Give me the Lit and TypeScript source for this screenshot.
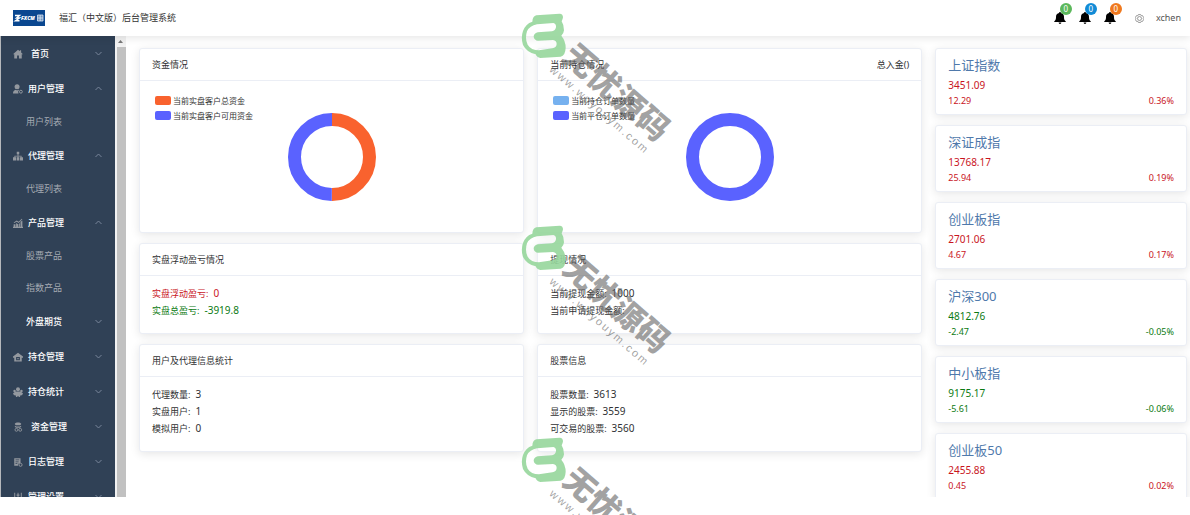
import { LitElement, html, css, svg, nothing, TemplateResult } from "lit";
import { customElement, property } from "lit/decorators.js";
import { classMap } from "lit/directives/class-map.js";

const icons: Record<string, TemplateResult> = {
  home: svg`<path d="M8 1 0 8.500h2V15h4.500v-4.500h3V15H14V8.500h2L13 5.600V2h-2v1.700z"/>`,
  user: svg`<circle cx="6.500" cy="4.200" r="4"/><path d="M0 15c0-3.600 1.600-5.300 4.500-5.900L6.500 10.500l2-1.500 1.300.5A4.500 4.500 0 0 0 8.800 15z"/><circle cx="12.600" cy="12.300" r="2.300" fill="none" stroke="currentColor" stroke-width="1.600"/>`,
  tree: svg`<path d="M6 1h4v4H8.700v2.500h5V10H16v5h-5v-5h1.300V8.900H8.700V10H10v5H6v-5h1.300V8.900H3.700V10H5v5H0v-5h2.300V7.500h5V5H6z"/>`,
  chart: svg`<path d="M1 10h3v4H1zM5 8l3 2v4H5zM9 10l2-2v6H9zM12 6l3-2v10h-3zM1 7l5-3 3 2 5-5 1 1-6 6-3-2-4 2zM0 14h16v2H0z"/>`,
  store: svg`<path d="M8 1 0 7v2h2v6h12V9h2V7zm-3 7h6v5H5zm2 1.500v2h2v-2z" fill-rule="evenodd"/>`,
  gift: svg`<circle cx="8" cy="3.500" r="3.200"/><circle cx="2.500" cy="6.500" r="2"/><circle cx="13.500" cy="6.500" r="2"/><path d="M4 7h8l4 3-1.500 3H12l-1 3H9.500L8 14l-1.500 2H5l-1-3H1.500L0 10z"/>`,
  coins: svg`<path d="M3 2.500C4 0 12 0 13 2.500v1C12 6 4 6 3 3.500zM3 6c2 1.800 8 1.800 10 0v2c-2 1.800-8 1.800-10 0z"/><circle cx="5.500" cy="12.500" r="2.300" fill="none" stroke="currentColor" stroke-width="1.400"/><circle cx="11.500" cy="12.500" r="2.300" fill="none" stroke="currentColor" stroke-width="1.400"/>`,
  log: svg`<path d="M2 2h10v7.500A3.500 3.500 0 0 0 8 14H2zm2 2v1.300h6V4zm0 3v1.300h5V7zm0 3v1.300h3V10z" fill-rule="evenodd"/><circle cx="12" cy="12.500" r="2.500" fill="none" stroke="currentColor" stroke-width="1.500"/>`,
  sliders: svg`<path d="M2 1h1.500v14H2zM7.300 1h1.500v14H7.300zM12.500 1H14v14h-1.500zM.5 8h4.500v2H.5zM5.800 4h4.500v2H5.800zM11 9h4.500v2H11z"/>`,
};

interface MenuEntry {
  label: string;
  icon?: string;
  wide?: boolean;
  open?: boolean;
  children?: string[];
}

const menu: MenuEntry[] = [
  { label: "首页", icon: "home", wide: true },
  { label: "用户管理", icon: "user", open: true, children: ["用户列表"] },
  { label: "代理管理", icon: "tree", open: true, children: ["代理列表"] },
  { label: "产品管理", icon: "chart", open: true, children: ["股票产品", "指数产品"] },
  { label: "外盘期货" },
  { label: "持仓管理", icon: "store" },
  { label: "持仓统计", icon: "gift" },
  { label: "资金管理", icon: "coins", wide: true },
  { label: "日志管理", icon: "log" },
  { label: "管理设置", icon: "sliders" },
];

const quotes = [
  { name: "上证指数", price: "3451.09", change: "12.29", rate: "0.36%" },
  { name: "深证成指", price: "13768.17", change: "25.94", rate: "0.19%" },
  { name: "创业板指", price: "2701.06", change: "4.67", rate: "0.17%" },
  { name: "沪深300", price: "4812.76", change: "-2.47", rate: "-0.05%" },
  { name: "中小板指", price: "9175.17", change: "-5.61", rate: "-0.06%" },
  { name: "创业板50", price: "2455.88", change: "0.45", rate: "0.02%" },
];

@customElement("top-bar")
class TopBar extends LitElement {
  static styles = css`
    :host {
      display: flex;
      align-items: center;
      height: 36px;
      padding: 0 9px 0 13px;
      box-sizing: border-box;
      background: #fff;
      box-shadow: 0 2px 8px rgba(0, 0, 0, 0.1);
      position: relative;
      z-index: 1;
    }
    .logo { display: block; width: 32px; height: 16px; }
    .logo-text { font: italic 800 5px "Open Sans", sans-serif; fill: #fff; }
    .title { margin: 0 auto 0 14px; font-size: 9px; font-weight: 400; line-height: 34px; color: #333; }
    .tools { display: flex; align-items: center; }
    button { font: inherit; border: 0; padding: 0; background: none; color: inherit; }
    .bell { position: relative; width: 13px; height: 13px; margin-right: 12px; color: #000; }
    .bell svg { display: block; width: 12px; height: 12px; }
    .badge {
      position: absolute;
      left: 6px;
      top: -9px;
      width: 12px;
      height: 12px;
      border-radius: 50%;
      color: #fff;
      font-size: 8px;
      line-height: 12px;
      text-align: center;
    }
    .green { background: #5cb85c; }
    .blue { background: #128bd6; }
    .orange { background: #f0791e; }
    .gear { width: 9px; height: 9px; margin: 0 12px 0 6px; color: #777; }
    .gear svg { display: block; width: 9px; height: 9px; }
    .name { font-size: 9px; line-height: 12px; color: #555; }
  `;

  render() {
    return html`
      <svg class="logo" viewBox="0 0 32 16" role="img" aria-label="FXCM">
        <rect width="32" height="16" fill="#0a4790" />
        <path d="M2 5.500h4.500L3.500 8h3L2.500 10.800h4" fill="none" stroke="#fff" stroke-width="1.400" />
        <text class="logo-text" x="8" y="10">FXCM</text>
        <path d="M24.500 5h5.500v6h-5.500zM24.500 8H30M27.200 5v6" fill="#6f93bf" stroke="#d8e3f0" stroke-width=".8" />
      </svg>
      <h1 class="title">福汇（中文版）后台管理系统</h1>
      <div class="tools">
        ${["green", "blue", "orange"].map(
          (c) => html`<button class="bell" aria-label="通知">
            <svg viewBox="0 0 13 13" fill="currentColor">
              <path d="M6.500 0C7.200 0 7.500.6 7.500 1.100 9.600 1.600 10.800 3 10.800 5c0 3 .4 4 1.900 5v.9H.3V10c1.500-1 1.900-2 1.900-5 0-2 1.200-3.400 3.300-3.900C5.500.6 5.800 0 6.500 0zM5 11.400h3a1.500 1.500 0 0 1-3 0z" />
            </svg>
            <span class="badge ${c}">0</span>
          </button>`
        )}
        <button class="gear" aria-label="设置">
          <svg viewBox="0 0 16 16" fill="none" stroke="currentColor" stroke-width="1.300">
            <path d="M6 1h4l1 2h2.500L15.500 6.500 14.500 8l1 1.500-2 3.500H11l-1 2H6l-1-2H2.500L.5 9.500 1.500 8l-1-1.500L2.500 3H5z" />
            <circle cx="8" cy="8" r="3.500" />
          </svg>
        </button>
        <button class="name">xchen</button>
      </div>
    `;
  }
}

@customElement("side-menu")
class SideMenu extends LitElement {
  static styles = css`
    :host { display: flex; flex: 0 0 126px; overflow: hidden; }
    nav { flex: 1; min-width: 0; background: #304156; border-left: 1px solid #b5b8bc; overflow: hidden; }
    .item {
      display: flex;
      align-items: center;
      gap: 5px;
      width: 100%;
      height: 35px;
      padding: 0 13px 0 12px;
      border: 0;
      background: none;
      color: #fff;
      font: inherit;
      font-size: 9px;
      font-weight: 500;
      text-align: left;
    }
    .wide { gap: 8px; }
    .plain { padding-left: 25px; }
    .icon { flex: none; width: 10px; height: 10px; color: #93989f; }
    .label { flex: 1; }
    .arrow { width: 7px; height: 5px; color: #78869a; }
    .sub { display: block; padding-left: 25px; line-height: 32px; font-size: 9px; color: #a5abb3; text-decoration: none; }
    .track { flex: 0 0 10px; display: flex; flex-direction: column; background: #f1f1f1; }
    .up { width: 5px; height: 3px; margin: 4px 3px 4px; }
    .thumb { flex: 1; margin-left: 2px; background: #c1c1c1; }
  `;

  render() {
    return html`
      <nav aria-label="主菜单">
        ${menu.map(
          (m) => html`
            <button class=${classMap({ item: true, wide: !!m.wide, plain: !m.icon })} aria-expanded=${m.open ? "true" : "false"}>
              ${m.icon ? html`<svg class="icon" viewBox="0 0 16 16" fill="currentColor">${icons[m.icon]}</svg>` : nothing}
              <span class="label">${m.label}</span>
              <svg class="arrow" viewBox="0 0 7 5" fill="none" stroke="currentColor">
                <path d=${m.open ? "M.5 4 3.500 1 6.500 4" : "M.5 1 3.500 4 6.500 1"} />
              </svg>
            </button>
            ${(m.children ?? []).map((c) => html`<a class="sub" href="#">${c}</a>`)}
          `
        )}
      </nav>
      <div class="track">
        <svg class="up" viewBox="0 0 5 3"><path d="M0 3 2.500 0 5 3z" fill="#777" /></svg>
        <div class="thumb"></div>
      </div>
    `;
  }
}

@customElement("info-card")
class InfoCard extends LitElement {
  @property() heading = "";
  @property() extra = "";

  static styles = css`
    :host {
      display: block;
      box-sizing: border-box;
      border: 1px solid #ebeef5;
      border-radius: 3px;
      background: #fff;
      box-shadow: 0 2px 10px rgba(0, 0, 0, 0.1);
      color: #303133;
    }
    header {
      display: flex;
      justify-content: space-between;
      padding: 0 12px;
      line-height: 31px;
      font-size: 9px;
      border-bottom: 1px solid #ebeef5;
    }
    h2 { margin: 0; font-size: 9px; font-weight: 400; }
  `;

  render() {
    return html`<header><h2>${this.heading}</h2><span>${this.extra}</span></header><slot></slot>`;
  }
}

@customElement("donut-chart")
class DonutChart extends LitElement {
  @property({ attribute: false }) series: { label: string; color: string; share: number }[] = [];

  static styles = css`
    :host { display: grid; height: 151px; }
    .legend, .ring { grid-area: 1 / 1; }
    .legend { list-style: none; margin: 0; padding: 12px 15px; font-size: 8px; line-height: 15px; color: #333; }
    .legend li { display: flex; align-items: center; gap: 2px; }
    .swatch { width: 16px; height: 9px; border-radius: 2px; }
    .ring { width: 88px; height: 88px; place-self: center; }
  `;

  render() {
    const r = 37.5;
    const len = 2 * Math.PI * r;
    let offset = 0;
    return html`
      <ul class="legend">
        ${this.series.map((s) => html`<li><span class="swatch" style="background:${s.color}"></span>${s.label}</li>`)}
      </ul>
      <svg class="ring" viewBox="0 0 88 88" fill="none" stroke-width="13">
        ${this.series.map((s) => {
          const arc = svg`<circle cx="44" cy="44" r=${r} stroke=${s.color} transform="rotate(-90 44 44)"
            stroke-dasharray="${len * s.share} ${len}" stroke-dashoffset=${-offset} />`;
          offset += len * s.share;
          return s.share ? arc : nothing;
        })}
      </svg>
    `;
  }
}

@customElement("water-mark")
class WaterMark extends LitElement {
  static styles = css`
    :host { display: block; position: relative; width: 160px; height: 212px; }
    .mark { position: absolute; left: 6px; top: 8px; width: 45px; height: 46px; }
    .name, .site { position: absolute; transform: rotate(41deg); color: rgba(100, 100, 100, 0.6); white-space: nowrap; }
    .name { left: 36px; top: 67px; width: 132px; text-align: center; font-size: 32px; line-height: 40px; font-weight: 900; }
    .site { left: 21px; top: 96px; width: 126px; display: flex; justify-content: space-between; font: 400 11px/16px "Liberation Sans", sans-serif; }
  `;

  render() {
    return html`
      <svg class="mark" viewBox="18 24 135 138" fill="#96d69b" fill-opacity=".9" fill-rule="evenodd">
        <path
          d="M64 31 134 26Q144 27 144 37 143 44 140 49 147 60 147 76 146 87 139 92 152 108 152 128 151 152 137 155L76 159Q66 158 62 148 35 142 24 120 17 98 24 78 32 56 52 50 53 33 64 31Z
             M115 54Q124 56 123 67 121 77 111 79L68 82Q56 86 56 95 58 106 69 107L114 105Q125 107 125 117 124 128 112 130L72 136Q48 136 38 119 29 101 36 79 44 62 66 58Z"
        />
      </svg>
      <div class="name">无忧源码</div>
      <div class="site">${[..."www.wuyouym.com"].map((c) => html`<span>${c}</span>`)}</div>
    `;
  }
}

@customElement("app-root")
class AppRoot extends LitElement {
  static styles = css`
    :host {
      display: flex;
      flex-direction: column;
      position: relative;
      height: 100vh;
      padding-bottom: 18px;
      box-sizing: border-box;
      overflow: hidden;
      background: #fff;
      font-family: "Noto Sans", "Noto Sans CJK SC", sans-serif;
      font-size: 9px;
    }
    .body { display: flex; flex: 1; min-height: 0; overflow: hidden; }
    main { display: flex; flex: 1; gap: 13px; align-items: flex-start; min-width: 0; padding: 12px 3px 0 13px; }
    .stats { flex: 28; display: grid; grid-template-columns: 1fr 1fr; gap: 10px 13px; min-width: 0; }
    .quotes { flex: 9; display: grid; gap: 10px; min-width: 0; }
    .lines { margin: 0; padding: 9px 12px 14px; line-height: 17px; }
    .line { display: flex; gap: 5px; }
    .line dd { margin: 0; font-size: 10px; }
    .quote {
      padding: 6px 12px 7px;
      border: 1px solid #ebeef5;
      border-radius: 3px;
      background: #fff;
      box-shadow: 0 2px 10px rgba(0, 0, 0, 0.1);
    }
    .quote a { display: block; font-size: 13px; line-height: 20px; color: #4f79ab; text-decoration: none; }
    .price { font-size: 10px; line-height: 20px; }
    .move { display: flex; justify-content: space-between; line-height: 12px; }
    .up { color: #c9151e; }
    .down { color: #0b7a12; }
    .marks { position: absolute; left: 515px; top: 5px; z-index: 2; pointer-events: none; }
  `;

  private lines(rows: [string, string, string?][]) {
    return html`<dl class="lines">
      ${rows.map(([k, v, tone]) => html`<div class="line ${tone ?? ""}"><dt>${k}:</dt><dd>${v}</dd></div>`)}
    </dl>`;
  }

  render() {
    return html`
      <top-bar></top-bar>
      <div class="body">
        <side-menu></side-menu>
        <main>
          <section class="stats">
            <info-card heading="资金情况">
              <donut-chart .series=${[
                { label: "当前实盘客户总资金", color: "#f9622e", share: 0.5 },
                { label: "当前实盘客户可用资金", color: "#5a62ff", share: 0.5 },
              ]}></donut-chart>
            </info-card>
            <info-card heading="当前持仓情况" extra="总入金()">
              <donut-chart .series=${[
                { label: "当前持仓订单数量", color: "#76b1ef", share: 0 },
                { label: "当前平仓订单数量", color: "#5a62ff", share: 1 },
              ]}></donut-chart>
            </info-card>
            <info-card heading="实盘浮动盈亏情况">
              ${this.lines([["实盘浮动盈亏", "0", "up"], ["实盘总盈亏", "-3919.8", "down"]])}
            </info-card>
            <info-card heading="提现情况">
              ${this.lines([["当前提现金额", "1000"], ["当前申请提现金额", ""]])}
            </info-card>
            <info-card heading="用户及代理信息统计">
              ${this.lines([["代理数量", "3"], ["实盘用户", "1"], ["模拟用户", "0"]])}
            </info-card>
            <info-card heading="股票信息">
              ${this.lines([["股票数量", "3613"], ["显示的股票", "3559"], ["可交易的股票", "3560"]])}
            </info-card>
          </section>
          <section class="quotes">
            ${quotes.map((q) => {
              const tone = q.change.startsWith("-") ? "down" : "up";
              return html`<article class="quote">
                <a href="#">${q.name}</a>
                <div class="price ${tone}">${q.price}</div>
                <div class="move ${tone}"><span>${q.change}</span><span>${q.rate}</span></div>
              </article>`;
            })}
          </section>
        </main>
      </div>
      <div class="marks" aria-hidden="true">
        <water-mark></water-mark>
        <water-mark></water-mark>
        <water-mark></water-mark>
      </div>
    `;
  }
}
